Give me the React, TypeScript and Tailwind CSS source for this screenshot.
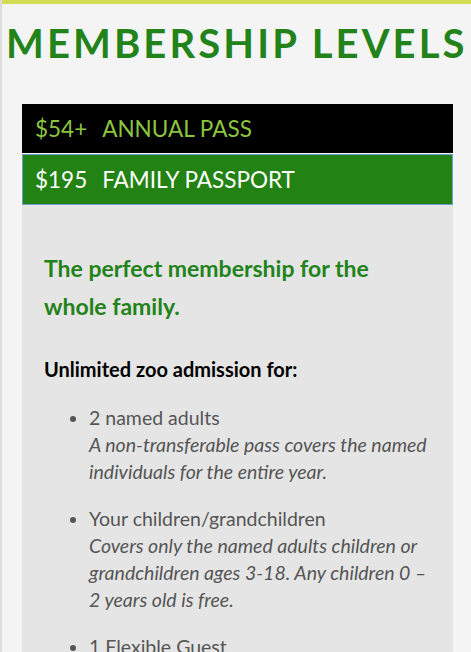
import React from "react";

export default function App() {
  return (
    <div
      className="min-h-[652px] w-[471px] bg-[#f4f4f4] border-l-2 border-[#dcdcdc] relative overflow-hidden"
      style={{ fontFamily: "Lato, 'Open Sans', sans-serif" }}
    >
      <div className="h-1 bg-[#d1dc52] -ml-[2px]" />
      <h1 className="pl-[4px] pt-[15px] text-[40px] leading-[48px] font-bold tracking-[3.1px] text-[#22831a] whitespace-nowrap">
        MEMBERSHIP LEVELS
      </h1>
      <div className="ml-[20px] mr-[18px] mt-[37px]">
        <div className="h-[49px] bg-black flex items-center pl-[13px] text-[22.5px] text-[#8cc63f]">
          <span className="mr-[15px]">$54+</span>
          <span>ANNUAL PASS</span>
        </div>
        <div className="mt-[1px] h-[51px] bg-[#228214] border border-[#6a9fd0] flex items-center pl-[12px] text-[22.5px] text-white">
          <span className="mr-[15px]">$195</span>
          <span>FAMILY PASSPORT</span>
        </div>
        <div className="bg-[#e5e5e5] pl-[22px] pr-[20px] pt-[44px] pb-[20px]">
          <h2 className="text-[23px] leading-[38px] font-bold text-[#22831a] pr-[40px]">
            The perfect membership for the whole family.
          </h2>
          <p className="mt-[31px] text-[20px] leading-[27px] font-bold text-black">
            Unlimited zoo admission for:
          </p>
          <ul className="mt-[21px] list-disc pl-[45px] text-[19.5px] leading-[27px] text-[#555] marker:text-[#555]">
            <li>
              2 named adults
              <br />
              <em>A non-transferable pass covers the named individuals for the entire year.</em>
            </li>
            <li className="mt-[20px]">
              Your children/grandchildren
              <br />
              <em>
                Covers only the named adults children or grandchildren ages 3-18. Any children 0 – 2 years old is free.
              </em>
            </li>
            <li className="mt-[20px]">1 Flexible Guest</li>
          </ul>
        </div>
      </div>
    </div>
  );
}
